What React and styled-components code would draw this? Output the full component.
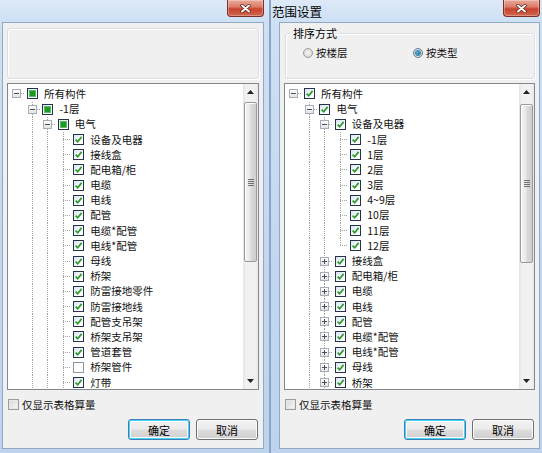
import React from 'react';
import styled, { createGlobalStyle } from 'styled-components';

const GlobalStyle = createGlobalStyle`
  html, body { margin: 0; padding: 0; }
  body {
    background: #c4d8ef;
    font-family: "Noto Sans CJK SC", "Liberation Sans", sans-serif;
    font-size: 10.5px;
    color: #111;
  }
`;

const INDENT = 15.4;

const Desktop = styled.div`
  display: flex;
  width: 542px;
  height: 453px;
  overflow: hidden;
`;

const Window = styled.section`
  flex: none;
  width: ${({ $width }) => $width}px;
  height: 100%;
  display: flex;
  flex-direction: column;
  box-sizing: border-box;
  background: linear-gradient(180deg, #dde9f7 0px, #cde0f4 22px, #c2d7ef 60%, #bed4ed 100%);
  border-left: ${({ $edgeLeft }) => ($edgeLeft ? '1px solid #8aa5c6' : 'none')};
  border-right: ${({ $edgeRight }) => ($edgeRight ? '1px solid #8aa5c6' : 'none')};
`;

const TitleBar = styled.header`
  flex: none;
  height: 22px;
  display: flex;
  justify-content: space-between;
  align-items: flex-start;
  padding: 0 ${({ $closeInset }) => $closeInset}px 0 ${({ $titleInset }) => $titleInset}px;
`;

const Title = styled.span`
  align-self: center;
  font-size: 12.5px;
  color: #000;
`;

const CloseButton = styled.div`
  width: 37px;
  height: 17px;
  box-sizing: border-box;
  border: 1px solid #7a2f28;
  border-top: none;
  border-radius: 0 0 4px 4px;
  background: linear-gradient(180deg, #e9aa9c 0%, #dc7d69 42%, #c7432d 56%, #d2654e 100%);
  box-shadow: inset 0 0 0 1px rgba(255, 255, 255, 0.3);
  display: flex;
  align-items: center;
  justify-content: center;
`;

const Client = styled.div`
  flex: 1;
  margin: 0 ${({ $right }) => $right}px 4px ${({ $left }) => $left}px;
  box-sizing: border-box;
  background: #f0f0f0;
  border: 1px solid #93a9c3;
  padding: 5px 4px 0;
  display: flex;
  flex-direction: column;
`;

const BlankPanel = styled.div`
  flex: none;
  height: 51px;
  box-sizing: border-box;
  border: 1px solid #d5dfe5;
  border-radius: 3px;
  box-shadow: inset 1px 1px 0 #fff, 1px 1px 0 #fff;
`;

const GroupBox = styled.fieldset`
  flex: none;
  height: 52px;
  margin: -1px 0 0 1px;
  padding: 0;
  box-sizing: border-box;
  border: 1px solid #d5dfe5;
  border-radius: 3px;
  box-shadow: inset 1px 1px 0 #fff, 1px 1px 0 #fff;
`;

const Legend = styled.legend`
  margin-left: 5px;
  padding: 0 2px;
  font-size: 11px;
  line-height: 12px;
  color: #000;
`;

const RadioGroup = styled.div`
  display: grid;
  grid-template-columns: 110px 1fr;
  align-items: center;
  padding: 7px 0 0 17px;
`;

const RadioOption = styled.label`
  display: flex;
  align-items: center;
  gap: 3px;
  white-space: nowrap;
  line-height: 14px;
`;

const RadioDot = styled.span`
  width: 10px;
  height: 10px;
  box-sizing: border-box;
  border-radius: 50%;
  border: 1px solid ${({ $on }) => ($on ? '#5a7894' : '#9a9a9a')};
  background: radial-gradient(circle, #ececec 0 35%, #dcdcdc 60%, #f6f6f6 100%);
  display: flex;
  align-items: center;
  justify-content: center;
  &::after {
    content: '';
    width: 4px;
    height: 4px;
    border-radius: 50%;
    display: ${({ $on }) => ($on ? 'block' : 'none')};
    background: radial-gradient(circle at 40% 40%, #4fb1d9, #0f4f79);
    box-shadow: 0 0 0 1px #3e88b4;
  }
`;

const TreeBox = styled.div`
  flex: none;
  height: 307px;
  margin-top: 4px;
  box-sizing: border-box;
  border: 1px solid #828790;
  background: #fff;
  display: flex;
  overflow: hidden;
`;

const TreeList = styled.ul`
  flex: 1;
  margin: 0;
  padding: 2.4px 0 0 1.3px;
  list-style: none;
  overflow: hidden;
`;

const Row = styled.li`
  height: 15.2px;
  display: flex;
  align-items: stretch;
  white-space: nowrap;
`;

const V_DOTS = 'repeating-linear-gradient(to bottom, #a3a3a3 0 1px, transparent 1px 2px)';
const H_DOTS = 'repeating-linear-gradient(to right, #a3a3a3 0 1px, transparent 1px 2px)';
const FULL_V = `${V_DOTS} 50% 0 / 1px 100% no-repeat`;
const TOP_V = `${V_DOTS} 50% 0 / 1px 50% no-repeat`;
const RIGHT_H = `${H_DOTS} 100% 50% / 50% 1px no-repeat`;

const guideBackground = {
  blank: 'none',
  pipe: FULL_V,
  tee: `${FULL_V}, ${RIGHT_H}`,
  ell: `${TOP_V}, ${RIGHT_H}`,
  root: RIGHT_H,
};

const Guide = styled.span`
  flex: none;
  width: ${INDENT}px;
  display: flex;
  align-items: center;
  justify-content: center;
  background: ${({ $kind }) => guideBackground[$kind]};
`;

const Expander = styled.span`
  width: 9px;
  height: 9px;
  box-sizing: border-box;
  border: 1px solid #a6adb6;
  background: linear-gradient(180deg, #ffffff, #e4e4e4);
  display: flex;
  align-items: center;
  justify-content: center;
`;

const CheckCell = styled.span`
  flex: none;
  width: ${INDENT}px;
  display: flex;
  align-items: center;
  justify-content: center;
`;

const CheckBox = styled.span`
  flex: none;
  width: 11px;
  height: 11px;
  box-sizing: border-box;
  border: 1px solid ${({ $state }) => ($state === 'off' ? '#8b96a3' : '#24324a')};
  background: ${({ $state }) =>
    $state === 'off'
      ? '#fff'
      : 'linear-gradient(135deg, #d7e4f1, #ffffff 70%)'};
  display: flex;
  align-items: center;
  justify-content: center;
`;

const MixedMark = styled.span`
  width: 5px;
  height: 5px;
  background: #1c9b22;
  box-shadow: 0 0 0 1px #5cbc5f;
`;

const Label = styled.span`
  align-self: center;
  margin-left: 4px;
  line-height: 12px;
`;

const ScrollBar = styled.div`
  flex: none;
  width: 15px;
  display: flex;
  flex-direction: column;
  background: linear-gradient(to right, #e4e4e4, #f1f1f1 3px, #f1f1f1 12px, #e9e9e9);
`;

const Arrow = styled.div`
  flex: none;
  height: 16px;
  display: flex;
  align-items: center;
  justify-content: center;
`;

const Thumb = styled.div`
  flex: none;
  height: ${({ $size }) => $size}px;
  margin: ${({ $offset }) => $offset}px 1px 0;
  box-sizing: border-box;
  border: 1px solid #9a9a9a;
  border-radius: 2px;
  background: linear-gradient(to right, #f4f4f4, #e9e9e9 45%, #d9d9d9 55%, #cfcfcf);
  box-shadow: inset 1px 1px 0 #fff;
  display: flex;
  align-items: center;
  justify-content: center;
`;

const Track = styled.div`
  flex: 1;
`;

const OptionRow = styled.label`
  flex: none;
  margin-top: 9px;
  padding-left: 1px;
  height: 11px;
  display: flex;
  align-items: center;
  gap: 3px;
  white-space: nowrap;
`;

const PlainBox = styled.span`
  width: 11px;
  height: 11px;
  box-sizing: border-box;
  border: 1px solid #9c9c9c;
  background: linear-gradient(135deg, #d6d6d6, #f2f2f2 80%);
  box-shadow: inset 0 0 0 1px #e8e8e8;
`;

const ButtonRow = styled.div`
  flex: none;
  margin-top: 9px;
  padding-right: 1px;
  display: flex;
  justify-content: flex-end;
  gap: 6px;
`;

const Button = styled.button`
  width: 62px;
  height: 21px;
  padding: 0;
  font: inherit;
  font-size: 11px;
  color: #000;
  border-radius: 3px;
  border: 1px solid ${({ $primary }) => ($primary ? '#3c7fb1' : '#707070')};
  background: linear-gradient(180deg, #f2f2f2 0%, #ebebeb 48%, #dddddd 52%, #cfcfcf 100%);
  box-shadow: ${({ $primary }) =>
    $primary ? 'inset 0 0 0 1px #48d1f9, inset 0 0 0 2px #f5fbfe' : 'inset 0 0 0 1px #fcfcfc'};
`;

function CloseGlyph() {
  return (
    <svg width="11" height="9" viewBox="0 0 11 9">
      <path d="M2 1.5 L9 7.5 M9 1.5 L2 7.5" stroke="#5a1c16" strokeWidth="3.4" strokeLinecap="round" />
      <path d="M2 1.5 L9 7.5 M9 1.5 L2 7.5" stroke="#fff" strokeWidth="2" strokeLinecap="round" />
    </svg>
  );
}

function ExpanderGlyph({ open }) {
  return (
    <Expander>
      <svg width="7" height="7" viewBox="0 0 7 7">
        <path d="M1 3.5 H6" stroke="#4a4f57" strokeWidth="1" />
        {!open && <path d="M3.5 1 V6" stroke="#4a4f57" strokeWidth="1" />}
      </svg>
    </Expander>
  );
}

function TreeCheck({ state }) {
  return (
    <CheckBox $state={state}>
      {state === 'mixed' && <MixedMark />}
      {state === 'on' && (
        <svg width="9" height="9" viewBox="0 0 9 9">
          <path d="M1.6 4.6 L3.7 6.8 L7.6 1.9" fill="none" stroke="#2d9c2d" strokeWidth="1.7" />
        </svg>
      )}
    </CheckBox>
  );
}

function TreeRow({ guides, exp, state, text }) {
  return (
    <Row>
      {guides.map((kind, i) => (
        <Guide key={i} $kind={kind}>
          {i === guides.length - 1 && exp && <ExpanderGlyph open={exp === 'minus'} />}
        </Guide>
      ))}
      <CheckCell>
        <TreeCheck state={state} />
      </CheckCell>
      <Label>{text}</Label>
    </Row>
  );
}

function VScroll({ offset, size }) {
  return (
    <ScrollBar>
      <Arrow>
        <svg width="7" height="4" viewBox="0 0 7 4"><path d="M0 4 L3.5 0 L7 4 Z" fill="#222" /></svg>
      </Arrow>
      <Thumb $offset={offset} $size={size}>
        <svg width="6" height="7" viewBox="0 0 6 7">
          <path d="M0 0.5 H6 M0 2.5 H6 M0 4.5 H6 M0 6.5 H6" stroke="#6f6f6f" strokeWidth="1" />
        </svg>
      </Thumb>
      <Track />
      <Arrow>
        <svg width="7" height="4" viewBox="0 0 7 4"><path d="M0 0 L7 0 L3.5 4 Z" fill="#222" /></svg>
      </Arrow>
    </ScrollBar>
  );
}

const L3 = ['blank', 'pipe', 'pipe', 'tee'];

const leftTree = [
  { guides: ['root'], exp: 'minus', state: 'mixed', text: '所有构件' },
  { guides: ['blank', 'tee'], exp: 'minus', state: 'mixed', text: '-1层' },
  { guides: ['blank', 'pipe', 'tee'], exp: 'minus', state: 'mixed', text: '电气' },
  ...['设备及电器', '接线盒', '配电箱/柜', '电缆', '电线', '配管', '电缆*配管', '电线*配管', '母线', '桥架',
    '防雷接地零件', '防雷接地线', '配管支吊架', '桥架支吊架', '管道套管', '桥架管件', '灯带'].map((text) => ({
    guides: L3,
    state: text === '桥架管件' ? 'off' : 'on',
    text,
  })),
];

const floors = ['-1层', '1层', '2层', '3层', '4~9层', '10层', '11层', '12层'];

const rightTree = [
  { guides: ['root'], exp: 'minus', state: 'on', text: '所有构件' },
  { guides: ['blank', 'tee'], exp: 'minus', state: 'on', text: '电气' },
  { guides: ['blank', 'pipe', 'tee'], exp: 'minus', state: 'on', text: '设备及电器' },
  ...floors.map((text, i) => ({
    guides: i === floors.length - 1 ? ['blank', 'pipe', 'pipe', 'ell'] : L3,
    state: 'on',
    text,
  })),
  ...['接线盒', '配电箱/柜', '电缆', '电线', '配管', '电缆*配管', '电线*配管', '母线', '桥架'].map((text) => ({
    guides: ['blank', 'pipe', 'tee'],
    exp: 'plus',
    state: 'on',
    text,
  })),
];

function Dialog({ width, title, titleInset, closeInset, frame, edge, top, rows, thumb }) {
  return (
    <Window $width={width} $edgeLeft={edge === 'left'} $edgeRight={edge === 'right'}>
      <TitleBar $titleInset={titleInset} $closeInset={closeInset}>
        <Title>{title}</Title>
        <CloseButton>
          <CloseGlyph />
        </CloseButton>
      </TitleBar>
      <Client $left={frame[0]} $right={frame[1]}>
        {top}
        <TreeBox>
          <TreeList>
            {rows.map((r, i) => (
              <TreeRow key={i} {...r} />
            ))}
          </TreeList>
          <VScroll offset={thumb[0]} size={thumb[1]} />
        </TreeBox>
        <OptionRow>
          <PlainBox />
          仅显示表格算量
        </OptionRow>
        <ButtonRow>
          <Button $primary>确定</Button>
          <Button>取消</Button>
        </ButtonRow>
      </Client>
    </Window>
  );
}

export default function App() {
  return (
    <>
      <GlobalStyle />
      <Desktop>
        <Dialog
          width={270}
          title=""
          titleInset={2}
          closeInset={5}
          frame={[2, 5]}
          edge="right"
          top={<BlankPanel />}
          rows={leftTree}
          thumb={[2, 160]}
        />
        <Dialog
          width={272}
          title="范围设置"
          titleInset={1}
          closeInset={2}
          frame={[8, 2]}
          edge="left"
          top={
            <GroupBox>
              <Legend>排序方式</Legend>
              <RadioGroup>
                <RadioOption>
                  <RadioDot />
                  按楼层
                </RadioOption>
                <RadioOption>
                  <RadioDot $on />
                  按类型
                </RadioOption>
              </RadioGroup>
            </GroupBox>
          }
          rows={rightTree}
          thumb={[4, 159]}
        />
      </Desktop>
    </>
  );
}
